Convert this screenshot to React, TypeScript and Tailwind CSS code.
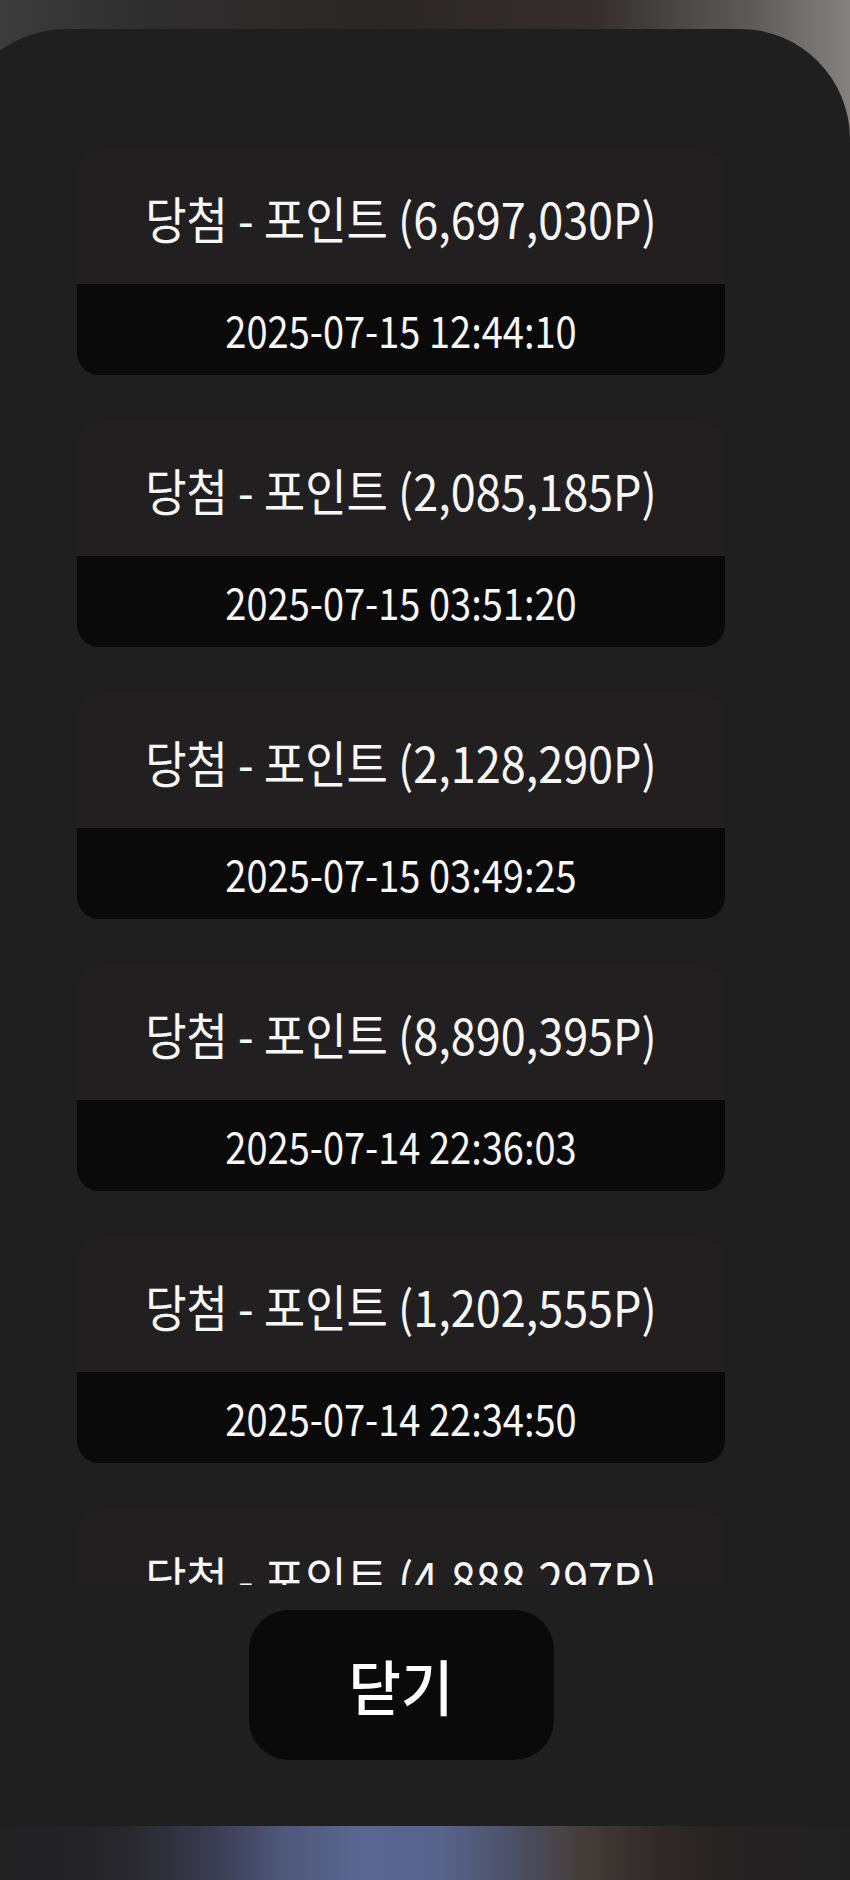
const font = { fontFamily: '"Noto Sans CJK KR", "Noto Sans", sans-serif' };

type Win = { amount: string; at: string };

const wins: Win[] = [
  { amount: '6,697,030', at: '2025-07-15 12:44:10' },
  { amount: '2,085,185', at: '2025-07-15 03:51:20' },
  { amount: '2,128,290', at: '2025-07-15 03:49:25' },
  { amount: '8,890,395', at: '2025-07-14 22:36:03' },
  { amount: '1,202,555', at: '2025-07-14 22:34:50' },
  { amount: '4,888,297', at: '2025-07-14 22:31:12' },
];

function WinCard({ win }: { win: Win }) {
  return (
    <div className="w-[648px] shrink-0 mx-auto rounded-[22px] bg-[#221f20] flex flex-col">
      <div className="h-[134px] flex items-center justify-center text-[45px] leading-none text-[#f7f7f7]">
        <span className="inline-block scale-y-[1.1]">당첨 - 포인트 ({win.amount}P)</span>
      </div>
      <div className="h-[91px] rounded-b-[22px] bg-[#0b0a0a] flex items-center justify-center text-[38px] leading-none text-[#f7f7f7]">
        <span className="inline-block scale-y-[1.15]">{win.at}</span>
      </div>
    </div>
  );
}

export default function App() {
  return (
    <div
      className="w-[850px] h-[1880px] overflow-hidden flex flex-col bg-[linear-gradient(90deg,#3c3c3c_0%,#2f2e2e_18%,#2a2625_45%,#342f2e_70%,#5c5a58_88%,#838280_100%)]"
      style={font}
    >
      <div className="h-[29px] shrink-0" />

      <div className="w-[898px] -ml-[48px] h-[1797px] shrink-0 bg-[#201f20] rounded-tl-[115px] rounded-tr-[110px] flex flex-col items-center">
        <div className="h-[1556px] w-full overflow-hidden pt-[121px] flex flex-col gap-[47px]">
          {wins.map((w) => (
            <WinCard key={w.at} win={w} />
          ))}
        </div>

        <button className="mt-[25px] w-[305px] h-[150px] rounded-[40px] bg-[#0b0a0b] text-white text-[57px] font-medium leading-none flex items-center justify-center">
          <span className="inline-block scale-y-[1.05]">닫기</span>
        </button>
      </div>

      <div className="h-[54px] shrink-0 bg-[linear-gradient(90deg,#222122_0%,#232225_7%,#28272d_15%,#3a3b4f_25%,#4e5779_33%,#5a6690_42%,#57638b_52%,#4c4f63_61%,#453e3b_68%,#2f2827_78%,#242222_88%,#222122_100%)]" />
    </div>
  );
}
